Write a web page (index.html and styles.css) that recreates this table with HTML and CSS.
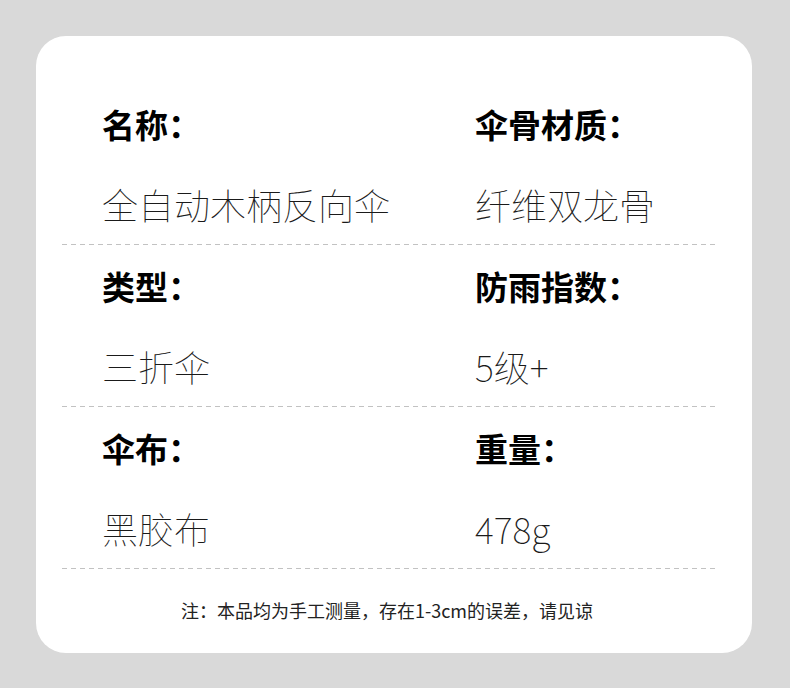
FILE: index.html
```html
<!DOCTYPE html>
<html lang="zh-CN">
<head>
<meta charset="utf-8">
<link rel="stylesheet" href="styles.css">
</head>
<body>
<div class="card">
  <div class="row">
    <div class="cell">
      <div class="label">名称：</div>
      <div class="value">全自动木柄反向伞</div>
    </div>
    <div class="cell">
      <div class="label">伞骨材质：</div>
      <div class="value">纤维双龙骨</div>
    </div>
  </div>
  <div class="sep"></div>
  <div class="row">
    <div class="cell">
      <div class="label">类型：</div>
      <div class="value">三折伞</div>
    </div>
    <div class="cell">
      <div class="label">防雨指数：</div>
      <div class="value">5级+</div>
    </div>
  </div>
  <div class="sep"></div>
  <div class="row">
    <div class="cell">
      <div class="label">伞布：</div>
      <div class="value">黑胶布</div>
    </div>
    <div class="cell">
      <div class="label">重量：</div>
      <div class="value">478g</div>
    </div>
  </div>
  <div class="sep"></div>
  <div class="note">注：本品均为手工测量，存在1-3cm的误差，请见谅</div>
</div>
</body>
</html>
```
FILE: styles.css
```css
html, body {
  margin: 0;
  padding: 0;
}
body {
  background: #d9d9d9;
  width: 790px;
  height: 688px;
  padding: 36px 0 0 36px;
  box-sizing: border-box;
  font-family: "Noto Sans CJK SC", "Noto Sans", sans-serif;
}
.card {
  width: 716px;
  height: 617px;
  box-sizing: border-box;
  background: #ffffff;
  border-radius: 30px;
  padding: 47px 34px 0 26px;
}
.row {
  display: grid;
  grid-template-columns: 373px 1fr;
  padding: 21px 0 20px 40px;
}
.cell {
  display: flex;
  flex-direction: column;
  gap: 40px;
}
.label {
  font-size: 33px;
  font-weight: 700;
  line-height: 40px;
  height: 40px;
  color: #000;
  white-space: nowrap;
}
.value {
  font-size: 36px;
  font-weight: 100;
  line-height: 40px;
  height: 40px;
  color: #1a1a1a;
  white-space: nowrap;
}
.sep {
  height: 1px;
  background-image: repeating-linear-gradient(to right, #c2c2c2 0 5px, transparent 5px 9px);
}
.note {
  margin-top: 29px;
  font-size: 18px;
  line-height: 24px;
  color: #222;
  text-align: center;
  white-space: nowrap;
  padding-right: 6px;
}
```
